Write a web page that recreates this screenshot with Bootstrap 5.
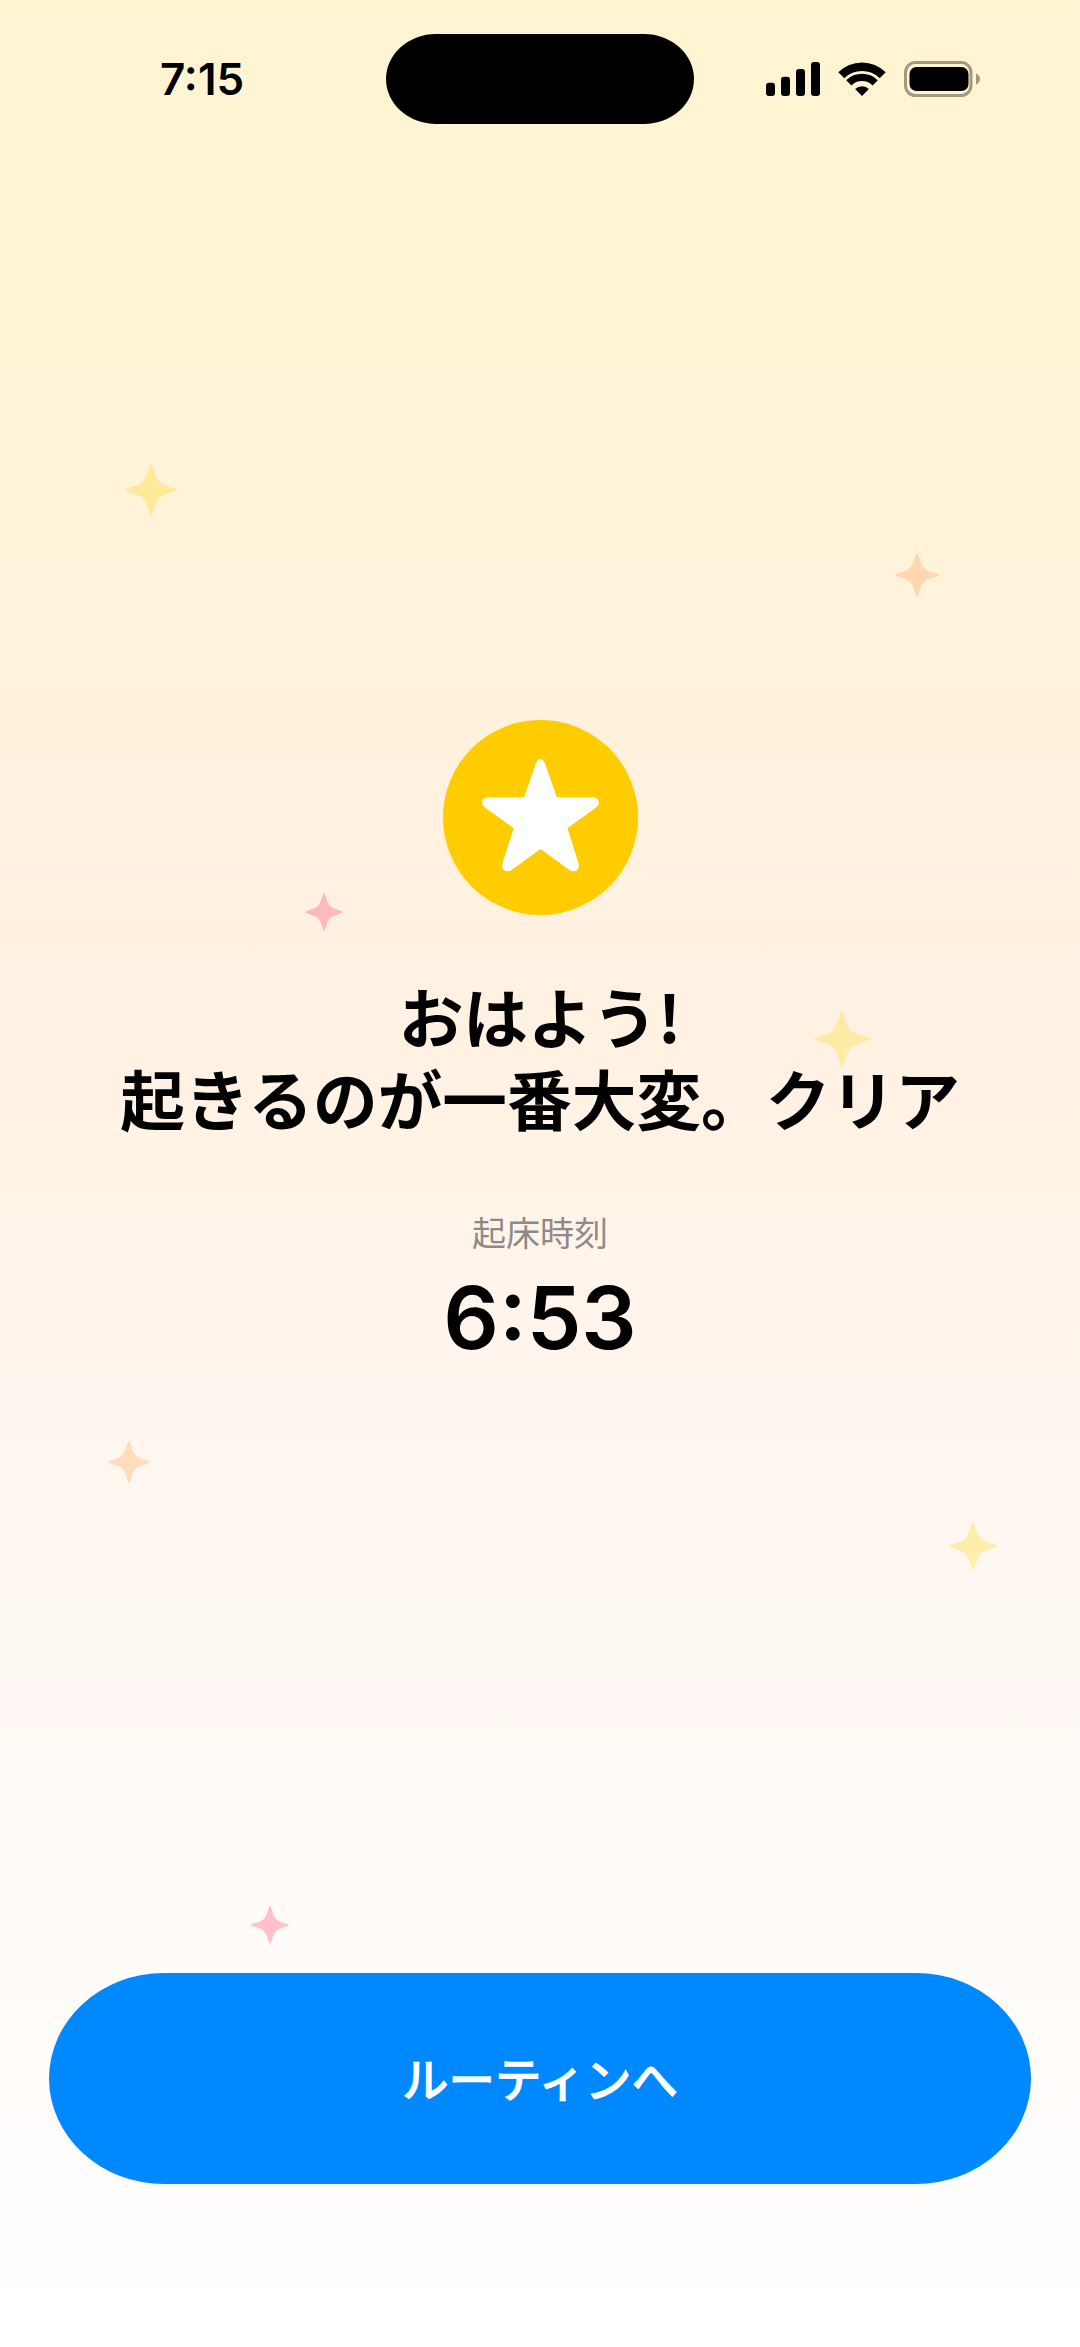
<!DOCTYPE html>
<html lang="ja">
<head>
    <meta charset="UTF-8">
    <meta name="viewport" content="width=device-width, initial-scale=1.0">
    <title>おはよう</title>
    <link href="https://cdn.jsdelivr.net/npm/bootstrap@5.3.0/dist/css/bootstrap.min.css" rel="stylesheet">
    <style>
        body {
            font-family: Inter, "Noto Sans CJK JP", sans-serif;
            color: #000;
        }
        .screen {
            height: 2347px;
            overflow: hidden;
            background: linear-gradient(180deg, #fff5d1 0%, #fff1e0 40%, #fff6ef 60%, #ffffff 100%);
        }
        .status-bar { padding-top: 34px; }
        .status-side { flex: none; width: 386px; }
        .status-time {
            padding-left: 160px;
            font-size: 44px;
            font-weight: 600;
            line-height: 90px;
        }
        .island {
            flex: none;
            width: 308px;
            height: 90px;
            background: #000;
            border-radius: 50px / 45px;
        }
        .status-icons { padding-left: 72px; gap: 18px; }
        .sparkle { position: absolute; }
        .sun {
            width: 195px;
            height: 195px;
            margin-top: 596px;
            background: #ffcc00;
        }
        .headline {
            margin-top: 59px;
            font-family: "Noto Sans CJK JP", sans-serif;
            font-size: 64.7px;
            font-weight: 700;
            line-height: 82px;
        }
        .wake-label {
            margin-top: 72px;
            font-family: "Noto Sans CJK JP", sans-serif;
            font-size: 34px;
            line-height: 44px;
            color: #8e8a88;
        }
        .wake-time {
            margin-top: 14px;
            font-size: 87px;
            font-weight: 600;
            line-height: 100px;
        }
        .routine-btn {
            height: 211px;
            margin: auto 49px 163px;
            padding-bottom: 9px;
            background: #0088ff;
            border: 0;
            border-radius: 115px / 105.5px;
            color: #fff;
            font-family: "Noto Sans CJK JP", sans-serif;
            font-size: 46.5px;
            font-weight: 500;
            -webkit-text-stroke: 0.7px #fff;
        }
        .routine-btn:hover { background: #0088ff; color: #fff; }
    </style>
</head>
<body class="m-0">
    <div class="screen position-relative d-flex flex-column">
        <svg class="sparkle" style="left:125px;top:464px" width="52" height="52" viewBox="0 0 100 100"><path fill="#ffe99a" d="M50 0C54 0 56 24 66 34C76 44 100 46 100 50C100 54 76 56 66 66C56 76 54 100 50 100C46 100 44 76 34 66C24 56 0 54 0 50C0 46 24 44 34 34C44 24 46 0 50 0Z"/></svg>
        <svg class="sparkle" style="left:895px;top:553px" width="44" height="44" viewBox="0 0 100 100"><path fill="#ffd8b0" d="M50 0C54 0 56 24 66 34C76 44 100 46 100 50C100 54 76 56 66 66C56 76 54 100 50 100C46 100 44 76 34 66C24 56 0 54 0 50C0 46 24 44 34 34C44 24 46 0 50 0Z"/></svg>
        <svg class="sparkle" style="left:305px;top:893px" width="38" height="38" viewBox="0 0 100 100"><path fill="#ffb8bd" d="M50 0C54 0 56 24 66 34C76 44 100 46 100 50C100 54 76 56 66 66C56 76 54 100 50 100C46 100 44 76 34 66C24 56 0 54 0 50C0 46 24 44 34 34C44 24 46 0 50 0Z"/></svg>
        <svg class="sparkle" style="left:814px;top:1011px" width="56" height="56" viewBox="0 0 100 100"><path fill="#ffeba5" d="M50 0C54 0 56 24 66 34C76 44 100 46 100 50C100 54 76 56 66 66C56 76 54 100 50 100C46 100 44 76 34 66C24 56 0 54 0 50C0 46 24 44 34 34C44 24 46 0 50 0Z"/></svg>
        <svg class="sparkle" style="left:108px;top:1441px" width="42" height="42" viewBox="0 0 100 100"><path fill="#ffdcbc" d="M50 0C54 0 56 24 66 34C76 44 100 46 100 50C100 54 76 56 66 66C56 76 54 100 50 100C46 100 44 76 34 66C24 56 0 54 0 50C0 46 24 44 34 34C44 24 46 0 50 0Z"/></svg>
        <svg class="sparkle" style="left:949px;top:1522px" width="48" height="48" viewBox="0 0 100 100"><path fill="#ffedaa" d="M50 0C54 0 56 24 66 34C76 44 100 46 100 50C100 54 76 56 66 66C56 76 54 100 50 100C46 100 44 76 34 66C24 56 0 54 0 50C0 46 24 44 34 34C44 24 46 0 50 0Z"/></svg>
        <svg class="sparkle" style="left:251px;top:1906px" width="38" height="38" viewBox="0 0 100 100"><path fill="#ffc0c8" d="M50 0C54 0 56 24 66 34C76 44 100 46 100 50C100 54 76 56 66 66C56 76 54 100 50 100C46 100 44 76 34 66C24 56 0 54 0 50C0 46 24 44 34 34C44 24 46 0 50 0Z"/></svg>

        <div class="status-bar d-flex align-items-center">
            <div class="status-side status-time">7:15</div>
            <div class="island"></div>
            <div class="status-side status-icons d-flex align-items-center">
                <svg width="54" height="34" viewBox="0 0 54 34"><rect x="0" y="20.700" width="9" height="13.300" rx="3"/><rect x="15" y="14.700" width="9" height="19.300" rx="3"/><rect x="30" y="7" width="9" height="27" rx="3"/><rect x="45" y="0" width="9" height="34" rx="3"/></svg>
                <svg width="48" height="34" viewBox="0 0 48 34"><path d="M.3 10.300A33.500 33.500 0 0 1 47.700 10.300L41.700 16.300A25 25 0 0 0 6.300 16.300Z"/><path d="M8.200 18.200A22.300 22.300 0 0 1 39.800 18.200L34.600 23.400A15 15 0 0 0 13.400 23.400Z"/><path d="M17.100 27.100A9.700 9.700 0 0 1 30.900 27.100L24 34Z"/></svg>
                <svg width="76" height="36" viewBox="0 0 76 36"><rect x="1.500" y="1.500" width="65.500" height="33" rx="10" fill="none" stroke="#a09a80" stroke-width="3"/><rect x="5.500" y="6" width="59" height="24" rx="7"/><path fill="#a09a80" d="M72 12.500C74.500 13.500 76 15.500 76 18C76 20.500 74.500 22.500 72 23.500Z"/></svg>
            </div>
        </div>

        <div class="d-flex flex-column align-items-center text-center">
            <div class="sun rounded-circle d-flex align-items-center justify-content-center">
                <svg class="mb-1" width="119" height="113" viewBox="240 205 358 340"><path fill="#fff" d="M370 320L404 222C410 200 428 200 434 222L468 320H575C595 320 602 340 585 352L500 413L533 518C540 538 520 550 505 538L419 476L333 538C318 550 298 538 305 518L338 413L253 352C236 340 243 320 263 320Z"/></svg>
            </div>
            <h1 class="headline mb-0">おはよう!<br>起きるのが一番大変。クリア</h1>
            <p class="wake-label mb-0">起床時刻</p>
            <p class="wake-time mb-0">6:53</p>
        </div>

        <button type="button" class="btn routine-btn">ルーティンへ</button>
    </div>

    <script src="https://cdn.jsdelivr.net/npm/bootstrap@5.3.0/dist/js/bootstrap.bundle.min.js"></script>
</body>
</html>
